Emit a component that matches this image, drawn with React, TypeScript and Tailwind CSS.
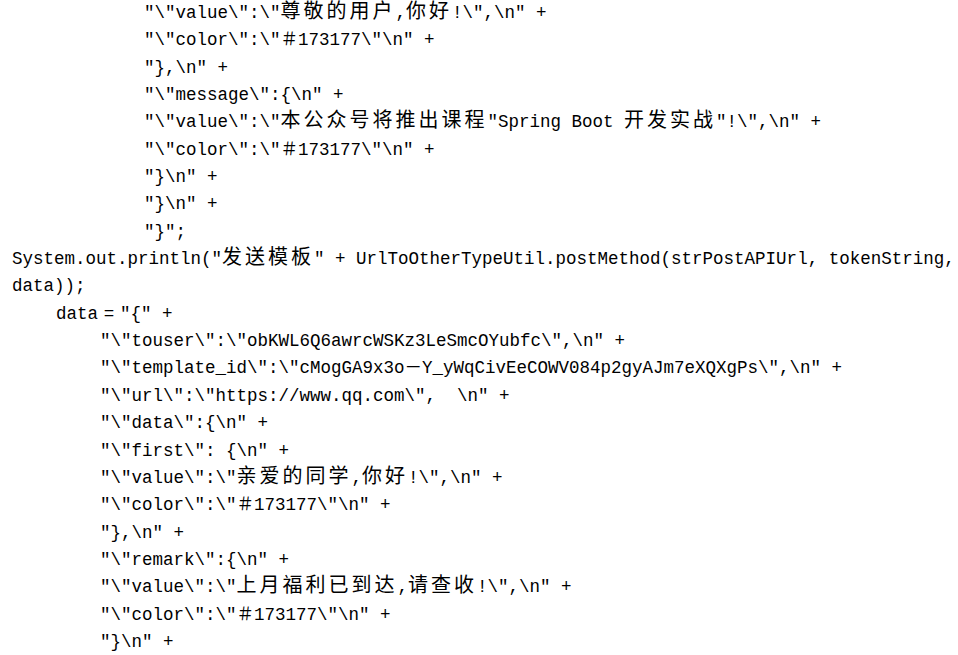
import React from "react";

// indent level -> left padding
const INDENT: Record<number, string> = {
  0: "pl-[12px]",
  1: "pl-[56px]",
  2: "pl-[100px]",
  3: "pl-[144px]",
};

type Line = { level: number; text: string };

const LINES: Line[] = [
  { level: 3, text: String.raw`"\"value\":\"尊敬的用户,你好!\",\n" +` },
  { level: 3, text: String.raw`"\"color\":\"＃173177\"\n" +` },
  { level: 3, text: String.raw`"},\n" +` },
  { level: 3, text: String.raw`"\"message\":{\n" +` },
  { level: 3, text: String.raw`"\"value\":\"本公众号将推出课程"Spring Boot 开发实战"!\",\n" +` },
  { level: 3, text: String.raw`"\"color\":\"＃173177\"\n" +` },
  { level: 3, text: String.raw`"}\n" +` },
  { level: 3, text: String.raw`"}\n" +` },
  { level: 3, text: String.raw`"}";` },
  { level: 0, text: String.raw`System.out.println("发送模板" + UrlToOtherTypeUtil.postMethod(strPostAPIUrl, tokenString,` },
  { level: 0, text: String.raw`data));` },
  { level: 1, text: "__ASSIGN__" },
  { level: 2, text: String.raw`"\"touser\":\"obKWL6Q6awrcWSKz3LeSmcOYubfc\",\n" +` },
  { level: 2, text: String.raw`"\"template_id\":\"cMogGA9x3o－Y_yWqCivEeCOWV084p2gyAJm7eXQXgPs\",\n" +` },
  { level: 2, text: String.raw`"\"url\":\"https://www.qq.com\",  \n" +` },
  { level: 2, text: String.raw`"\"data\":{\n" +` },
  { level: 2, text: String.raw`"\"first\": {\n" +` },
  { level: 2, text: String.raw`"\"value\":\"亲爱的同学,你好!\",\n" +` },
  { level: 2, text: String.raw`"\"color\":\"＃173177\"\n" +` },
  { level: 2, text: String.raw`"},\n" +` },
  { level: 2, text: String.raw`"\"remark\":{\n" +` },
  { level: 2, text: String.raw`"\"value\":\"上月福利已到达,请查收!\",\n" +` },
  { level: 2, text: String.raw`"\"color\":\"＃173177\"\n" +` },
  { level: 2, text: String.raw`"}\n" +` },
];

// split into latin / CJK runs so the ideographs get their wider pitch
function renderText(text: string) {
  const parts = text.split(/([\u4e00-\u9fff]+)/);
  return parts.map((p, i) =>
    /[\u4e00-\u9fff]/.test(p) ? (
      <span key={i} className="font-['Noto_Sans_CJK_SC',sans-serif] text-[20px] leading-none tracking-[3px]">
        {p}
      </span>
    ) : (
      <React.Fragment key={i}>{p}</React.Fragment>
    )
  );
}

export default function App() {
  return (
    <div className="w-[958px] h-[655px] overflow-hidden bg-white text-black">
      <div className="font-['Liberation_Mono','Noto_Sans_CJK_SC',monospace] text-[17.5px] leading-[27.35px]">
        {LINES.map((line, i) => (
          <div key={i} className={`h-[27.35px] whitespace-pre ${INDENT[line.level]}`}>
            {line.text === "__ASSIGN__" ? (
              <>
                data
                <span className="inline-block w-[22px] text-center">=</span>
                {`"{" +`}
              </>
            ) : (
              renderText(line.text)
            )}
          </div>
        ))}
      </div>
    </div>
  );
}
